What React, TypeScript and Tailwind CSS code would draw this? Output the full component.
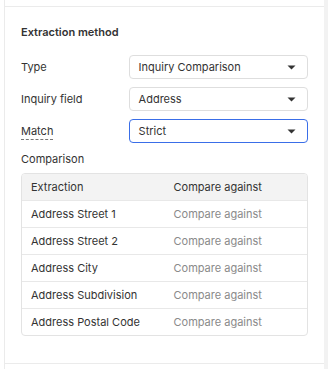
import React from "react";

const rows = [
  "Address Street 1",
  "Address Street 2",
  "Address City",
  "Address Subdivision",
  "Address Postal Code",
];

function Caret() {
  return (
    <svg width="9" height="5" viewBox="0 0 9 5" className="shrink-0">
      <path d="M0.5 0.5 H8.5 L4.5 4.5 Z" fill="#333" />
    </svg>
  );
}

function Select({ value, active }: { value: string; active?: boolean }) {
  return (
    <div
      className={`flex h-[24px] w-[180px] items-center justify-between rounded-[4px] border bg-white pl-[9px] pr-[11px] ${
        active ? "border-[#3a6ee8]" : "border-[#dedede]"
      }`}
    >
      <span className="text-[#333]">{value}</span>
      <Caret />
    </div>
  );
}

export default function App() {
  return (
    <div
      className="flex h-[369px] w-[328px] bg-white text-[11px] leading-[14px] text-[#333]"
      style={{ fontFamily: "Inter, 'Noto Sans', sans-serif" }}
    >
      <div className="ml-[4px] flex w-[320px] flex-col border-l border-[#ebebeb]">
        <div className="h-[7px] shrink-0 border-b border-[#ebebeb]" />
        <div className="h-[357px] shrink-0 border-b border-[#ebebeb] px-4 pt-[18px]">
          <h2 className="font-semibold">Extraction method</h2>

          <div className="mt-4 flex flex-col gap-[8px]">
            <div className="flex items-center">
              <div className="w-[108px]">Type</div>
              <Select value="Inquiry Comparison" />
            </div>
            <div className="flex items-center">
              <div className="w-[108px]">Inquiry field</div>
              <Select value="Address" />
            </div>
            <div className="flex items-center">
              <div className="w-[108px]">
                <span className="inline-block border-b border-dashed border-[#777] leading-[16px]">
                  Match
                </span>
              </div>
              <Select value="Strict" active />
            </div>
          </div>

          <div className="mt-[9px]">Comparison</div>

          <div className="mt-[7px] w-[287px] overflow-hidden rounded-[4px] border border-[#e3e3e3]">
            <div className="grid h-[26px] grid-cols-2 items-center bg-[#f3f3f3]">
              <div className="px-[9px]">Extraction</div>
              <div className="px-[9px]">Compare against</div>
            </div>
            {rows.map((r) => (
              <div
                key={r}
                className="grid h-[27px] grid-cols-2 items-center border-t border-[#e8e8e8]"
              >
                <div className="px-[9px]">{r}</div>
                <div className="px-[9px] text-[#8a8a8a]">Compare against</div>
              </div>
            ))}
          </div>
        </div>
      </div>
      <div className="w-[4px] bg-[#f2f2f2]" />
    </div>
  );
}
